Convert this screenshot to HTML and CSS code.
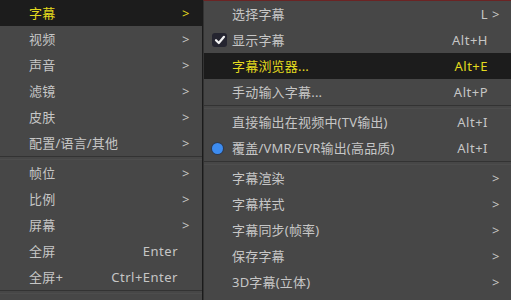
FILE: index.html
```html
<!DOCTYPE html>
<html lang="zh-CN">
  <head>
    <meta charset="UTF-8" />
    <title>菜单</title>
    <link rel="stylesheet" href="styles.css">
  </head>
  <body>
    <div class="menus">
      <!-- Main menu -->
      <div class="menu main-menu">
        <div class="item active"><span class="label">字幕</span><span class="key"></span><span class="arrow">&gt;</span></div>
        <div class="item"><span class="label">视频</span><span class="key"></span><span class="arrow">&gt;</span></div>
        <div class="item"><span class="label">声音</span><span class="key"></span><span class="arrow">&gt;</span></div>
        <div class="item"><span class="label">滤镜</span><span class="key"></span><span class="arrow">&gt;</span></div>
        <div class="item"><span class="label">皮肤</span><span class="key"></span><span class="arrow">&gt;</span></div>
        <div class="item"><span class="label">配置/语言/其他</span><span class="key"></span><span class="arrow">&gt;</span></div>
        <div class="separator"></div>
        <div class="item"><span class="label">帧位</span><span class="key"></span><span class="arrow">&gt;</span></div>
        <div class="item"><span class="label">比例</span><span class="key"></span><span class="arrow">&gt;</span></div>
        <div class="item"><span class="label">屏幕</span><span class="key"></span><span class="arrow">&gt;</span></div>
        <div class="item"><span class="label">全屏</span><span class="key">Enter</span><span class="arrow"></span></div>
        <div class="item"><span class="label">全屏+</span><span class="key">Ctrl+Enter</span><span class="arrow"></span></div>
        <div class="separator"></div>
      </div>

      <!-- Subtitle submenu -->
      <div class="menu sub-menu">
        <div class="item"><span class="label">选择字幕</span><span class="key">L</span><span class="arrow">&gt;</span></div>
        <div class="item">
          <span class="mark check">
            <svg width="14" height="14" viewBox="0 0 14 14"><path d="M3 7.2 L5.8 10 L11 3.8" fill="none" stroke="#f2f2f2" stroke-width="2.2" stroke-linecap="round" stroke-linejoin="round"/></svg>
          </span>
          <span class="label">显示字幕</span><span class="key">Alt+H</span><span class="arrow"></span>
        </div>
        <div class="item active"><span class="label">字幕浏览器...</span><span class="key">Alt+E</span><span class="arrow"></span></div>
        <div class="item"><span class="label">手动输入字幕...</span><span class="key">Alt+P</span><span class="arrow"></span></div>
        <div class="separator"></div>
        <div class="item"><span class="label">直接输出在视频中(TV输出)</span><span class="key">Alt+I</span><span class="arrow"></span></div>
        <div class="item"><span class="mark radio"></span><span class="label">覆盖/VMR/EVR输出(高品质)</span><span class="key">Alt+I</span><span class="arrow"></span></div>
        <div class="separator"></div>
        <div class="item"><span class="label">字幕渲染</span><span class="key"></span><span class="arrow">&gt;</span></div>
        <div class="item"><span class="label">字幕样式</span><span class="key"></span><span class="arrow">&gt;</span></div>
        <div class="item"><span class="label">字幕同步(帧率)</span><span class="key"></span><span class="arrow">&gt;</span></div>
        <div class="item"><span class="label">保存字幕</span><span class="key"></span><span class="arrow">&gt;</span></div>
        <div class="item"><span class="label">3D字幕(立体)</span><span class="key"></span><span class="arrow">&gt;</span></div>
      </div>
    </div>
  </body>
</html>
```

FILE: styles.css
```css
* {
  margin: 0;
  padding: 0;
  box-sizing: border-box;
}

body {
  font-family: "Noto Sans", "Noto Sans CJK SC", sans-serif;
  font-size: 13px;
  background: #474747;
  color: #c6c6c6;
  width: 511px;
  height: 300px;
  overflow: hidden;
}

.menus {
  display: flex;
  height: 300px;
}

.menu {
  background: #474747;
}

/* Main menu */
.main-menu {
  width: 203px;
  border-right: 1px solid #1b1b1b;
}

.main-menu .item {
  padding-left: 29px;
  padding-right: 12px;
  grid-template-columns: 1fr auto 12px;
}

/* Submenu */
.sub-menu {
  flex: 1;
  border-top: 1px solid #6b2424;
  border-left: 1px solid #333;
}

.sub-menu .item {
  padding-left: 28px;
  padding-right: 11px;
  grid-template-columns: 1fr auto 12px;
}

.item {
  position: relative;
  display: grid;
  align-items: center;
  height: 26px;
  line-height: 26px;
  white-space: nowrap;
}

.item.active {
  background: #1c1c1c;
  color: #e3da1e;
}

.key {
  text-align: right;
  letter-spacing: 0.5px;
}

.label {
  letter-spacing: 0.2px;
}

.arrow {
  padding-left: 4px;
}

.separator {
  height: 4px;
  border-top: 1px solid #333;
  border-bottom: 1px solid #4d4d4d;
}

/* Check / radio marks */
.mark {
  position: absolute;
  left: 8px;
  top: 6px;
}

.check {
  width: 15px;
  height: 14px;
  border-radius: 3px;
  background: #252530;
  display: flex;
  align-items: center;
  justify-content: center;
}

.radio {
  left: 8px;
  top: 8px;
  width: 11px;
  height: 11px;
  border-radius: 50%;
  background: #3d8cf0;
  box-shadow: 0 0 0 1px #2a3a55;
}
```
